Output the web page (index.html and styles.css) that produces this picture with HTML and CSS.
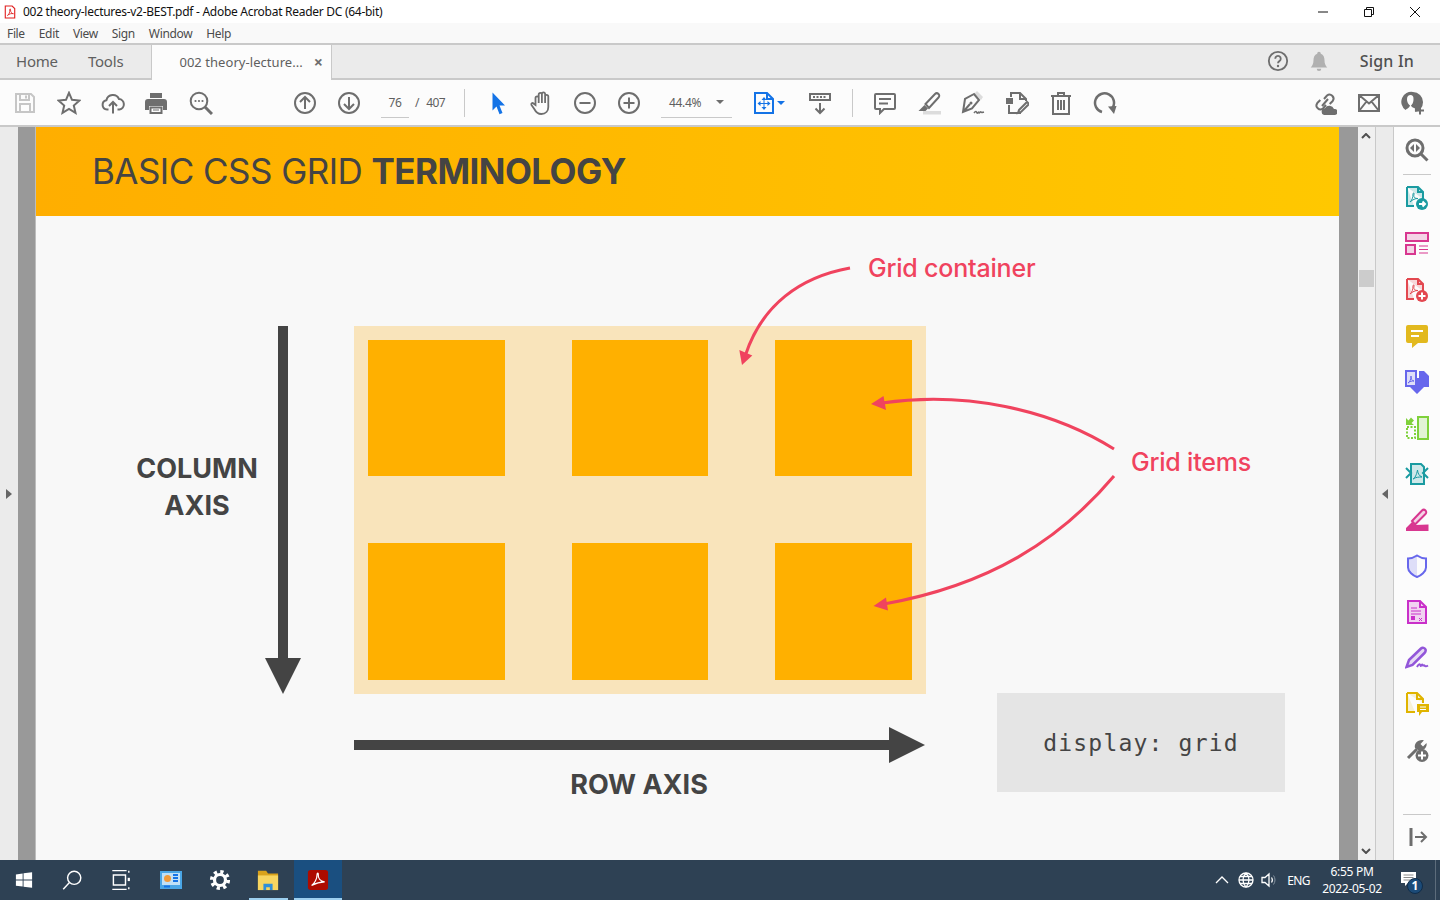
FILE: index.html
```html
<!DOCTYPE html>
<html lang="en">
<head>
<meta charset="utf-8">
<title>002 theory-lectures-v2-BEST.pdf - Adobe Acrobat Reader DC (64-bit)</title>
<link rel="stylesheet" href="styles.css">
</head>
<body>
<div class="app">
  <header class="titlebar">
    <svg class="app-icon" viewBox="0 0 14 16"><path class="s-red" d="M1.500 1h8l3 3v11h-11z"/><path class="s-red thin" d="M4 12c2-1 3-4 2.700-7 0-1 1-1 .9.2C7.400 8 9 10 11 10c-2-.7-5 .3-7 2z"/></svg>
    <span class="title-text">002 theory-lectures-v2-BEST.pdf - Adobe Acrobat Reader DC (64-bit)</span>
    <div class="win-controls">
      <button class="win-btn"><svg viewBox="0 0 12 12"><path class="s-black" d="M1 6h10"/></svg></button>
      <button class="win-btn"><svg viewBox="0 0 12 12"><path class="s-black" d="M1.500 3.500h7v7h-7zM3.500 3.500v-2h7v7h-2"/></svg></button>
      <button class="win-btn"><svg viewBox="0 0 12 12"><path class="s-black" d="M1 1l10 10M11 1L1 11"/></svg></button>
    </div>
  </header>

  <nav class="menubar">
    <span>File</span><span>Edit</span><span>View</span><span>Sign</span><span>Window</span><span>Help</span>
  </nav>

  <div class="tabbar">
    <span class="nav-tab nav-home">Home</span>
    <span class="nav-tab nav-tools">Tools</span>
    <div class="doc-tab">
      <span class="doc-name">002 theory-lecture...</span>
      <span class="doc-close">×</span>
    </div>
    <div class="tab-right">
      <svg class="ic" viewBox="0 0 24 24"><circle class="s" cx="12" cy="12" r="10"/><path class="s" d="M9 9.500a3 3 0 1 1 4.500 2.600c-1 .6-1.500 1-1.500 2.400"/><circle class="f" cx="12" cy="17.500" r="1.300"/></svg>
      <svg class="ic bell" viewBox="0 0 24 24"><path class="f-light" d="M12 2a2 2 0 0 1 2 2c3 1 4 4 4 7 0 4 1 6 3 8H3c2-2 3-4 3-8 0-3 1-6 4-7a2 2 0 0 1 2-2zM9.500 20.500h5a2.500 2.500 0 0 1-5 0z"/></svg>
      <span class="sign-in">Sign In</span>
    </div>
  </div>

  <div class="toolbar">
    <button class="tb"><svg class="ic" viewBox="0 0 24 24"><path class="s-light" d="M3 3h15l3 3v15H3zM7 3v6h9V3M7 21v-8h10v8"/><path class="s-light" d="M13 4.500v3"/></svg></button>
    <button class="tb"><svg class="ic" viewBox="0 0 24 24"><path class="s" d="M12 1.800l3 7 7.500.7-5.700 5 1.700 7.400L12 18l-6.500 3.900 1.700-7.400-5.700-5L9 8.800z"/></svg></button>
    <button class="tb"><svg class="ic" viewBox="0 0 24 24"><path class="s" d="M7.500 18.500H6a4.700 4.700 0 0 1-.6-9.300A6.700 6.700 0 0 1 18 8a5.300 5.300 0 0 1 .5 10.500H16.500"/><path class="s" d="M12 22.500V11.500M8 15l4-4 4 4"/></svg></button>
    <button class="tb tb-print"><svg class="ic" viewBox="0 0 24 24"><path class="f" d="M6 2h12v5H6zM4 8h16a3 3 0 0 1 3 3v8h-4v-4H5v4H1v-8a3 3 0 0 1 3-3z"/><path class="s" d="M6.500 16.500h11V22h-11z"/><path class="s thin" d="M9 19h6"/></svg></button>
    <button class="tb"><svg class="ic" viewBox="0 0 24 24"><circle class="s" cx="10" cy="10" r="8.300"/><path class="s thick" d="M16 16l7 7"/><circle class="f" cx="6.500" cy="10" r="1.100"/><circle class="f" cx="10" cy="10" r="1.100"/><circle class="f" cx="13.500" cy="10" r="1.100"/></svg></button>
    <button class="tb tb-gap-page"><svg class="ic" viewBox="0 0 24 24"><circle class="s" cx="12" cy="12" r="10"/><path class="s" d="M12 18V6.500M7 11l5-5 5 5"/></svg></button>
    <button class="tb"><svg class="ic" viewBox="0 0 24 24"><circle class="s" cx="12" cy="12" r="10"/><path class="s" d="M12 6v11.500M7 13l5 5 5-5"/></svg></button>
    <div class="page-box"><span class="page-input">76</span><span class="page-slash">/</span><span class="page-total">407</span></div>
    <span class="sep sep-a"></span>
    <button class="tb tb-pointer"><svg class="ic" viewBox="-1 0 24 24"><path class="f-blue" d="M6.500 1.500l12.500 13h-5.500l3 7.500-3 1.300-3-7.800-4 4z"/></svg></button>
    <button class="tb"><svg class="ic" viewBox="-1 0 24 24"><path class="s thin18" d="M5.500 14V7a1.600 1.600 0 0 1 3.200 0v5V3.500a1.600 1.600 0 0 1 3.200 0V12 3a1.600 1.600 0 0 1 3.200 0v9V5.500a1.600 1.600 0 0 1 3.200 0V16c0 4-2.500 7-7 7-4 0-5.500-2-7-5L1.500 14c-.8-1.500 1-2.700 2-1.500z"/></svg></button>
    <button class="tb"><svg class="ic" viewBox="0 0 24 24"><circle class="s" cx="12" cy="12" r="10"/><path class="s" d="M6.500 12h11"/></svg></button>
    <button class="tb"><svg class="ic" viewBox="0 0 24 24"><circle class="s" cx="12" cy="12" r="10"/><path class="s" d="M6.500 12h11M12 6.500v11"/></svg></button>
    <div class="zoom-box"><span class="zoom-value">44.4%</span><span class="caret caret-grey"></span></div>
    <button class="tb tb-fit"><svg class="ic" viewBox="0 0 24 24"><path class="s-blue" d="M3 2h12l6 6v14H3zM15 2v6h6"/><path class="f-blue" d="M12 6l2.500 3h-5zM12 19l-2.500-3h5zM5.500 12.500l3-2.500v5zM18.500 12.500l-3 2.500v-5z"/><path class="s-blue thin" d="M12 8v9M7 12.500h10"/></svg><span class="caret caret-blue"></span></button>
    <button class="tb tb-read"><svg class="ic" viewBox="0 0 24 24"><path class="s" d="M2 3h20v6H2z"/><path class="s-dots" d="M5 6h14"/><path class="s" d="M12 12v10M7.500 17.500L12 22l4.500-4.500"/></svg></button>
    <span class="sep sep-b"></span>
    <button class="tb tb-comment"><svg class="ic" viewBox="0 0 24 24"><path class="s" d="M3 3h18a1 1 0 0 1 1 1v13a1 1 0 0 1-1 1H11l-4 4v-4H3a1 1 0 0 1-1-1V4a1 1 0 0 1 1-1z"/><path class="s" d="M6 8h12M6 12.500h9"/></svg></button>
    <button class="tb"><svg class="ic" viewBox="0 0 24 24"><path class="f-pale" d="M6 20h18v3.500H6z"/><path class="s" d="M8.500 13L18 3c1-1 2.500-1 3.500 0s1 2.500 0 3.500L12 17z"/><path class="f" d="M7.500 14l3.500 3.500-2.500 2.500H1.500z"/></svg></button>
    <button class="tb"><svg class="ic" viewBox="0 0 24 24"><path class="f-pale" d="M13 3l7 6 2-3-6-6z"/><path class="s" d="M13 3L4 8 2 21l9-3.500 7-8.500zM2.500 20.500L9 13"/><circle class="f" cx="10" cy="12" r="1.500"/><path class="s thin15" d="M13 22c2-3 2.500-1 3 0s1.500-2 2-.5 1.500-1.500 2-.5 1 .5 3 0"/></svg></button>
    <button class="tb"><svg class="ic" viewBox="0 0 24 24"><path class="s" d="M6 6V2h9l6 6v2M4 14v8h12"/><path class="s" d="M15 2v6h6"/><path class="f" d="M1 7h7v6H1z"/><path class="s" d="M14 19l8-8 2 2-8 8-3 1z"/></svg></button>
    <button class="tb"><svg class="ic" viewBox="0 0 24 24"><path class="s" d="M2 5h20M9 5V2h6v3M4 5.500V23h16V5.500M9 9v10M12 9v10M15 9v10"/></svg></button>
    <button class="tb"><svg class="ic" viewBox="0 0 24 24"><path class="s wide" d="M9 21a9.500 9.500 0 1 1 10.500-4"/><path class="f" d="M15 15.500l8.500-.5-2.500 8z"/></svg></button>
    <div class="tb-right">
      <button class="tb"><svg class="ic" viewBox="0 0 24 24"><path class="s" d="M11 8l3-3.500a4 4 0 0 1 5.700 5.500l-3 3M13 14l-3 3.500A4 4 0 0 1 4.300 12l3-3M9 15l6-7"/><path class="f" d="M11 24a3.500 3.500 0 0 1 1-6.800 5 5 0 0 1 9 .8 3 3 0 0 1 1 6z"/></svg></button>
      <button class="tb"><svg class="ic" viewBox="0 0 24 24"><path class="s" d="M2 4h20v16H2zM2 4l10 8.500L22 4M2 20l7.500-9.500M22 20l-7.500-9.500"/></svg></button>
      <button class="tb"><svg class="ic" viewBox="0 0 24 24"><path class="f" d="M12 1a10 10 0 0 1 10 10 10 10 0 0 1-8 10c0-1-.2-2.500 0-3.500-2.500-1.500-3-1-4-3 1-1 2.500-2.500 2.500-6.500 0-3-1-4-3-4-2 0-3.500 1.500-3.500 4 0 4 2 5.500 3 6.500-1 3-3 3-4.500 4.500A10 10 0 0 1 12 1z"/><path class="s" d="M19 15.500v8M15 19.500h8"/></svg></button>
    </div>
  </div>

  <main class="workspace">
    <aside class="left-rail"><span class="tri tri-right"></span></aside>
    <div class="viewer">
      <article class="page">
        <header class="slide-head">
          <h1>BASIC CSS GRID <strong>TERMINOLOGY</strong></h1>
        </header>
        <div class="grid-demo">
          <div class="grid-item"></div><div class="grid-item"></div><div class="grid-item"></div>
          <div class="grid-item"></div><div class="grid-item"></div><div class="grid-item"></div>
        </div>
        <div class="label label-col">COLUMN<br>AXIS</div>
        <div class="label label-row">ROW AXIS</div>
        <div class="note note-container">Grid container</div>
        <div class="note note-items">Grid items</div>
        <div class="code-box">display: grid</div>
        <svg class="overlay" viewBox="36 127 1303 733">
          <path class="axis" d="M278 326h10v332h13l-18 36-18-36h13z"/>
          <path class="axis" d="M354 740h535v-13l36 18-36 18v-13H354z"/>
          <path class="arc" d="M850 268C800 277 762 305 745.500 355"/>
          <path class="head" d="M742 365l-2.700-15 13 5.500z"/>
          <path class="arc" d="M1114 449C1050 409 965 391 882 403"/>
          <path class="head" d="M871 404l12.500-8 2.500 14z"/>
          <path class="arc" d="M1114 476C1060 540 990 585 884 604"/>
          <path class="head" d="M873.500 606l12.500-8.500 2 13z"/>
        </svg>
      </article>
    </div>
    <div class="scrollbar">
      <svg class="sb-arrow" viewBox="0 0 10 6"><path class="s-dark" d="M1 5l4-4 4 4"/></svg>
      <span class="sb-thumb"></span>
      <svg class="sb-arrow sb-down" viewBox="0 0 10 6"><path class="s-dark" d="M1 1l4 4 4-4"/></svg>
    </div>
    <div class="splitter"><span class="tri tri-left"></span></div>
    <aside class="right-panel">
      <svg class="ic" viewBox="0 0 24 24"><circle class="s thick" cx="10" cy="10" r="8"/><path class="s thick" d="M16 16l6.500 6.500"/><path class="f" d="M9 6v8l-4-4zM11 6v8l4-4z"/></svg>
      <span class="rp-sep rp-sep-top"></span>
      <svg class="ic c-teal" viewBox="0 0 24 24"><path class="cs cf" d="M2 1h11l5 5v7M9 20H2V1"/><path class="cs" d="M13 1v5h5"/><path class="cs thin" d="M5 16c2-2 3-4 3-8 0-1.500 1.500-1.500 1 .5-.7 3 1 4 4 4-3 0-5 1-8 3.500z"/><circle class="cfill" cx="17" cy="18" r="6"/><path class="ws" d="M14 18h6M17.500 15.500l2.500 2.500-2.500 2.500"/></svg>
      <svg class="ic c-pink" viewBox="0 0 24 24"><path class="cs cf" d="M1 1h22v8H1zM1 13h9v9H1z"/><path class="cs thin" d="M14 14h9M14 17.500h9M14 21h9"/></svg>
      <svg class="ic c-red" viewBox="0 0 24 24"><path class="cs cf" d="M2 1h11l5 5v7M9 21H2V1"/><path class="cs" d="M13 1v5h5"/><path class="cs thin" d="M5 16c2-2 3-4 3-8 0-1.500 1.500-1.500 1 .5-.7 3 1 4 4 4-3 0-5 1-8 3.500z"/><circle class="cfill" cx="17" cy="18" r="6"/><path class="ws" d="M13.500 18h7M17 14.500v7"/></svg>
      <svg class="ic c-yellow" viewBox="0 0 24 24"><path class="cfill" d="M3 1h18a2 2 0 0 1 2 2v14a2 2 0 0 1-2 2h-8l-6 5v-5H3a2 2 0 0 1-2-2V3a2 2 0 0 1 2-2z"/><path class="ws" d="M6 7h12M6 12h8"/></svg>
      <svg class="ic c-indigo" viewBox="0 0 24 24"><path class="cs cf" d="M1 1h10v15H1z"/><path class="cfill" d="M14 1h5l5 5v11H14z"/><path class="cs thin" d="M3 13c2-1 3-4 3-7 0 3 1 5 3 5-2 0-4 0-6 2z"/><path class="ws thick" d="M12 8v9"/><path class="cfill" d="M10 8h4v9h5l-7 7-7-7h5z"/></svg>
      <svg class="ic c-green" viewBox="0 0 24 24"><path class="cs cf" d="M13 1h10v22H13z"/><path class="cs dash" d="M2 11h8v11H2z"/><path class="cfill" d="M1 9V2l2.500 2.500L6 1.500l3 3-2.500 2.500L9 9z"/></svg>
      <svg class="ic c-teal" viewBox="0 0 24 24"><path class="cs cf" d="M6 2h10l3 3v17H6z"/><path class="cs" d="M1 6l5 5-5 5M23 6l-5 5 5 5"/><path class="cs thin" d="M8 17c2-1 3.500-4 4.500-9 .3 3 1.500 6 4.500 7-3 0-6 0-9 2z"/></svg>
      <svg class="ic c-pink" viewBox="0 0 24 24"><path class="cs cf" d="M7 13L17 2.500c1-1 2.500-1 3.500 0s1 2.500 0 3.500L10 16.500z"/><path class="cfill" d="M7 14l2.500 3 14-.5V23H1v-3z"/></svg>
      <svg class="ic c-indigo" viewBox="0 0 24 24"><path class="cf" d="M12 1.500c-3 2-6 3-9 3v9c0 4 5 8 9 9.500z"/><path class="cs" d="M12 1.500c3 2 6 3 9 3v9c0 4-5 8-9 9.500-4-1.500-9-5.500-9-9.500v-9c3 0 6-1 9-3z"/></svg>
      <svg class="ic c-magenta" viewBox="0 0 24 24"><path class="cs cf" d="M3 1h12l6 6v16H3z"/><path class="cs" d="M15 1v6h6"/><path class="cs thin" d="M6 8h6M6 11h10M6 14h10M14 18l3 3M17 18l-3 3"/><path class="cfill" d="M6 16h4v4H6z"/></svg>
      <svg class="ic c-violet" viewBox="0 0 24 24"><path class="cs cf wide" d="M4 14L16 2.500c1.500-1.500 4-.5 4.500 1s0 2.500-1 3.500L7.500 19l-6 2z"/><path class="cs" d="M12 21c2-4 3-3 3.500-1.500s1.500-2 2-.5 1.500-.5 2 .5 2 1 3.500 0"/></svg>
      <svg class="ic c-gold" viewBox="0 0 24 24"><path class="cs cf2" d="M2 1h10l6 6v4M10 20H2V1"/><path class="cs" d="M12 1v6h6"/><path class="cfill" d="M12 12h12v8h-7l-3 4v-4h-2z"/><path class="ws thin" d="M15 15h6M15 17.500h6"/></svg>
      <svg class="ic" viewBox="0 0 24 24"><path class="s thick" d="M3 20L12 11"/><path class="f" d="M10 10c-1-4 2-8 7-8 1 0 2 .3 2 .3L15.500 6l2.500 2.500 3.500-3.500c1 4-2.500 8-7.500 7.500z"/><circle class="f" cx="17" cy="17.500" r="6.500"/><path class="ws" d="M13 17.500h8M17 13.500v8"/></svg>
      <span class="rp-sep rp-sep-bottom"></span>
      <svg class="ic ic-expand" viewBox="0 0 24 24"><path class="s thick" d="M6 3v18"/><path class="s" d="M10 12h11M16 7l5 5-5 5"/></svg>
    </aside>
  </main>

  <footer class="taskbar">
    <button class="task task-start"><svg viewBox="0 0 20 20"><path class="f-white" d="M1 3.800l7.500-1V9.500H1zM9.500 2.600L19 1.300V9.500H9.500zM1 10.500h7.500v6.800l-7.500-1zM9.500 10.500H19v8.200l-9.500-1.300z"/></svg></button>
    <button class="task"><svg viewBox="0 0 20 20"><circle class="s-white" cx="12" cy="8" r="6"/><path class="s-white" d="M7.500 12.500L2 18.500"/></svg></button>
    <button class="task"><svg viewBox="0 0 20 20"><path class="s-white" d="M4 5.500h11v9H4zM3 1.500h13M3 18.500h13"/><path class="f-white" d="M17 8h2v3h-2z"/><path class="s-white" d="M18 1.500v2M18 16.500v2"/></svg></button>
    <button class="task task-news"><svg viewBox="0 0 24 24"><path class="f-skyblue" d="M1 3h22v18H1z"/><path class="f-paleblue" d="M3 5h18v12H3z"/><circle class="f-orange" cx="8.500" cy="10.500" r="3.500"/><path class="s-blue" d="M14 7h5M14 10h5M14 13h5M5 18.500h6"/></svg></button>
    <button class="task task-gear"><svg viewBox="0 0 24 24"><circle class="gear-teeth" cx="12" cy="12" r="9"/><circle class="gear-ring" cx="12" cy="12" r="6"/></svg></button>
    <button class="task task-open"><svg viewBox="0 0 24 24"><path class="f-folderback" d="M1 2h9l2 3h11v18H1z"/><path class="f-folder" d="M1 7h22v16H1z"/><path class="f-folderblue" d="M7 23v-7h10v7h-3v-3h-4v3z"/></svg></button>
    <button class="task task-active"><svg viewBox="0 0 24 24"><rect class="f-acrobat" x="1" y="1" width="22" height="22" rx="3"/><path class="s-white" d="M5 18c3-2 6-7 6-12 0-2 1.500-2 1.300 0-.3 4 2 7.500 7 8-4 0-9 1-14.300 4z"/></svg></button>
    <div class="tray">
      <svg class="tray-icon" viewBox="0 0 16 16"><path class="s-white" d="M2 11l6-6 6 6"/></svg>
      <svg class="tray-icon tray-globe" viewBox="0 0 16 16"><circle class="s-white" cx="8" cy="8" r="7"/><path class="s-white" d="M1 8h14M8 1c-4 4-4 10 0 14M8 1c4 4 4 10 0 14M2 4.500h12M2 11.500h12"/></svg>
      <svg class="tray-icon tray-vol" viewBox="0 0 16 16"><path class="s-white" d="M1 5.500h3l4-3.500v12l-4-3.500H1zM10.500 5.500c1 1.500 1 3.500 0 5"/><path class="s-dim" d="M12.500 3.500c2 2.500 2 6.500 0 9"/></svg>
      <span class="tray-lang">ENG</span>
      <div class="clock"><span>6:55 PM</span><span>2022-05-02</span></div>
      <div class="notif">
        <svg viewBox="0 0 20 20"><path class="f-white" d="M1 1h15v11H8l-3 3v-3H1z"/><path class="s-bar" d="M3.500 4h10M3.500 6.500h10M3.500 9h7"/></svg>
        <span class="notif-badge">1</span>
      </div>
      <span class="show-desktop"></span>
    </div>
  </footer>
</div>
</body>
</html>
```

FILE: styles.css
```css
* { box-sizing: border-box; margin: 0; padding: 0; }
html, body { width: 1440px; height: 900px; overflow: hidden; background: #fff; }
body { font-family: "Noto Sans", "Open Sans", sans-serif; color: #4b4b4b; }
button { background: none; border: 0; font: inherit; }

.app { display: flex; flex-direction: column; width: 1440px; height: 900px; }

/* shared svg paint */
.s, .s-light, .s-blue, .s-dark, .s-dots, .s-black, .s-red, .s-white, .s-dim, .s-bar, .cs, .ws, .arc { fill: none; stroke-width: 2; }
.s { stroke: #6e6e6e; }
.s-light { stroke: #c6c6c6; }
.s-blue { stroke: #1473e6; }
.s-dark { stroke: #505050; }
.s-dots { stroke: #6e6e6e; stroke-width: 2; stroke-dasharray: 2 1.500; }
.s-black { stroke: #111; stroke-width: 1; }
.s-red { stroke: #e01f1f; stroke-width: 1.300; }
.s-white { stroke: #fff; stroke-width: 1.300; }
.s-dim { stroke: #8593a1; stroke-width: 1; }
.s-bar { stroke: #8a8a8a; stroke-width: 1; }
.thin { stroke-width: 1; }
.thin15 { stroke-width: 1.500; }
.thin18 { stroke-width: 1.800; }
.wide { stroke-width: 2.500; }
.thick { stroke-width: 3; }
.f { fill: #6e6e6e; }
.f-light { fill: #b0b0b0; }
.f-pale { fill: #dcdcdc; }
.f-blue { fill: #1473e6; }
.f-white { fill: #fff; }

.ic { width: 24px; height: 24px; display: block; flex: none; }

/* title bar */
.titlebar { height: 23px; flex: none; display: flex; align-items: center; padding-left: 4px; background: #fff; }
.app-icon { width: 12px; height: 14px; margin-right: 7px; }
.title-text { font-size: 12px; letter-spacing: -.28px; color: #111; white-space: nowrap; }
.win-controls { margin-left: auto; display: flex; margin-right: 2px; }
.win-btn { width: 46px; height: 23px; display: flex; align-items: center; justify-content: center; }
.win-btn svg { width: 12px; height: 12px; }

/* menu */
.menubar { height: 20px; flex: none; display: flex; align-items: center; gap: 14px; padding-left: 7px; background: #f9f9f9; font-size: 12px; letter-spacing: -.35px; color: #4b4b4b; }

/* tabs */
.tabbar { height: 37px; flex: none; display: flex; align-items: center; padding-bottom: 2px; background: #ebebeb; border-top: 2px solid #c9c9c9; border-bottom: 2px solid #c9c9c9; }
.nav-tab { font-size: 15px; letter-spacing: -.2px; color: #5f5f5f; }
.nav-home { margin-left: 16px; }
.nav-tools { margin-left: 30px; }
.doc-tab { align-self: stretch; margin: -2px 0 -4px 28px; width: 181px; display: flex; align-items: center; padding: 0 0 2px 27px; background: #fcfcfc; border-left: 1px solid #c9c9c9; border-right: 1px solid #c9c9c9; border-top: 2px solid #c9c9c9; }
.doc-name { font-size: 13px; letter-spacing: .05px; color: #5f5f5f; white-space: nowrap; }
.doc-close { margin-left: 11px; font-size: 16px; font-weight: 700; color: #6e6e6e; line-height: 1; }
.tab-right { margin-left: auto; display: flex; align-items: center; padding-right: 26px; }
.tab-right .ic { width: 22px; height: 22px; }
.bell { margin-left: 19px; }
.sign-in { margin-left: 30px; font-size: 16px; font-weight: 500; letter-spacing: .2px; color: #505050; }

/* toolbar */
.toolbar { height: 47px; flex: none; display: flex; align-items: center; padding-left: 3px; background: #fcfcfc; border-bottom: 2px solid #c9c9c9; }
.tb { width: 44px; height: 44px; flex: none; display: flex; align-items: center; justify-content: center; position: relative; }
.tb-print { margin: 0 1px 0 -1px; }
.tb-gap-page { margin-left: 60px; }
.page-box { display: flex; align-items: center; height: 30px; font-size: 12px; letter-spacing: -.3px; color: #5f5f5f; margin-left: 10px; }
.page-input { width: 28px; height: 30px; line-height: 30px; text-align: center; border-bottom: 1px solid #c9c9c9; }
.page-slash { margin-left: 6px; }
.page-total { margin-left: 7px; letter-spacing: -.6px; }
.sep { width: 1px; height: 28px; background: #c9c9c9; flex: none; }
.sep-a { margin-left: 19px; }
.tb-pointer { margin-left: 10px; }
.zoom-box { width: 71px; height: 30px; margin-left: 10px; display: flex; align-items: center; padding-left: 8px; font-size: 12px; letter-spacing: -.3px; color: #5f5f5f; border-bottom: 1px solid #c9c9c9; }
.caret { display: block; width: 0; height: 0; border-left: 4px solid transparent; border-right: 4px solid transparent; }
.caret-grey { margin-left: auto; margin-right: 8px; border-top: 4px solid #6e6e6e; }
.caret-blue { position: absolute; left: 35px; top: 20px; border-top: 4px solid #1473e6; }
.tb-fit { margin-left: 10px; }
.tb-read { margin-left: 12px; }
.sep-b { margin-left: 10px; }
.tb-comment { margin-left: 10px; }
.tb-right { margin-left: auto; margin-right: 5px; display: flex; }

/* workspace */
.workspace { flex: 1; min-height: 0; display: flex; background: #999; }
.left-rail { width: 18px; flex: none; background: #ebebeb; display: flex; align-items: center; justify-content: center; }
.tri { display: block; width: 0; height: 0; border-top: 5px solid transparent; border-bottom: 5px solid transparent; }
.tri-right { border-left: 6px solid #666; }
.tri-left { border-right: 6px solid #666; }
.viewer { width: 1340px; flex: none; background: #999; padding-left: 18px; overflow: hidden; }
.page { position: relative; width: 1303px; height: 733px; background: #f8f8f8; overflow: hidden; box-shadow: -1px 0 0 #bdbdbd; }
.slide-head { height: 89px; display: flex; align-items: center; padding-left: 56px; background: linear-gradient(90deg, #ffae00, #ffc800); }
.slide-head h1 { font: 400 35px/1 Inter, "Liberation Sans", sans-serif; letter-spacing: -.55px; color: #444; white-space: nowrap; }
.slide-head strong { font-weight: 700; }

.grid-demo { position: absolute; left: 318px; top: 199px; width: 572px; height: 368px; padding: 14px; display: grid; grid-template-columns: repeat(3, 1fr); grid-template-rows: 136px 137px; gap: 67px; background: #f9e4bb; }
.grid-item { background: #ffb000; }

.label { position: absolute; font: 700 27px/37px Inter, "Liberation Sans", sans-serif; color: #444; text-align: center; }
.label-col { left: 61px; top: 323px; width: 200px; }
.label-row { left: 503px; top: 639px; width: 200px; }
.note { position: absolute; font: 500 25px/32px Inter, "Liberation Sans", sans-serif; letter-spacing: -.2px; color: #f0435e; white-space: nowrap; }
.note-container { left: 832px; top: 125px; }
.note-items { left: 1095px; top: 319px; }
.code-box { position: absolute; left: 961px; top: 566px; width: 288px; height: 99px; display: flex; align-items: center; justify-content: center; padding-top: 2px; background: #e5e5e5; font: 400 23px/1 "DejaVu Sans Mono", "Liberation Mono", monospace; letter-spacing: 1.200px; color: #444; }

.overlay { position: absolute; left: 0; top: 0; width: 1303px; height: 733px; pointer-events: none; }
.axis { fill: #444; }
.arc { stroke: #f0435e; stroke-width: 3; }
.head { fill: #f0435e; }

/* scrollbar */
.scrollbar { width: 18px; flex: none; position: relative; background: #f0f0f0; border-right: 1px solid #c9c9c9; }
.sb-arrow { position: absolute; left: 3px; top: 6px; width: 10px; height: 6px; }
.sb-down { top: auto; bottom: 6px; }
.sb-thumb { position: absolute; left: 1px; top: 143px; width: 15px; height: 17px; background: #ccc; }
.splitter { width: 18px; flex: none; background: #ebebeb; border-right: 1px solid #c9c9c9; display: flex; align-items: center; justify-content: center; }

/* right panel */
.right-panel { flex: 1; background: #fcfcfc; display: flex; flex-direction: column; align-items: center; padding-top: 11px; gap: 22px; }
.rp-sep { display: block; width: 28px; height: 1px; background: #c9c9c9; flex: none; }
.rp-sep-top { margin: -10px 0 -11px; }
.rp-sep-bottom { margin: 30px 0 -12px; }
.c-teal { color: #1a9ba1; }
.c-pink { color: #d83790; }
.c-red { color: #e34850; }
.c-yellow { color: #e2b91f; }
.c-indigo { color: #6767ec; }
.c-green { color: #7fd13b; }
.c-magenta { color: #c930c9; }
.c-violet { color: #9256d9; }
.c-gold { color: #e0b400; }
.cs { stroke: currentColor; }
.cfill { fill: currentColor; }
.cf { fill: currentColor; fill-opacity: .2; }
.cf2 { fill: currentColor; fill-opacity: .15; }
.dash { stroke-dasharray: 2 1.500; }
.ws { stroke: #fff; }

/* taskbar */
.taskbar { height: 40px; flex: none; display: flex; background: #2e4154; color: #fff; }
.task { width: 48px; height: 40px; flex: none; display: flex; align-items: center; justify-content: center; position: relative; }
.task svg { width: 22px; height: 22px; display: block; }
.task-start svg { width: 18px; height: 18px; }
.task-news { margin-left: 3px; }
.task-news svg { width: 24px; height: 24px; }
.task-gear { margin-left: 1px; }
.task-open::after, .task-active::after { content: ""; position: absolute; bottom: 0; height: 2px; background: #9ccfef; }
.task-open::after { left: 5px; right: 4px; }
.task-active { background: #1a4f80; margin-left: 2px; }
.task-active::after { left: 0; right: 0; }
.f-skyblue { fill: #4aa6e6; }
.f-paleblue { fill: #bfe0f7; }
.f-orange { fill: #f09a3a; }
.f-folderback { fill: #d9a21b; }
.f-folder { fill: #f7d560; }
.f-folderblue { fill: #2f8fd8; }
.f-acrobat { fill: #ad0b00; }
.gear-teeth { fill: none; stroke: #fff; stroke-width: 4; stroke-dasharray: 3.500 3.570; }
.gear-ring { fill: none; stroke: #fff; stroke-width: 3.500; }

.tray { margin-left: auto; display: flex; align-items: center; height: 40px; }
.tray-icon { width: 16px; height: 16px; display: block; margin-right: 8px; }
.tray-globe { margin-right: 7px; }
.tray-vol { margin-right: 0; }
.tray-lang { margin-left: 10px; font-size: 12px; letter-spacing: -.6px; }
.clock { margin-left: 6px; width: 72px; display: flex; flex-direction: column; align-items: center; font-size: 12px; line-height: 17px; letter-spacing: -.3px; }
.notif { position: relative; width: 24px; height: 24px; margin-left: 9px; }
.notif svg { width: 20px; height: 20px; display: block; margin: 3px 0 0 3px; }
.notif-badge { position: absolute; left: 10px; top: 10px; width: 16px; height: 16px; border-radius: 50%; background: #1c4b78; border: 1px solid #0f2c4a; font-size: 12px; font-weight: 700; line-height: 14px; text-align: center; color: #fff; }
.show-desktop { margin-left: 14px; width: 1px; height: 40px; background: #5d6c7b; margin-right: 4px; }
```
